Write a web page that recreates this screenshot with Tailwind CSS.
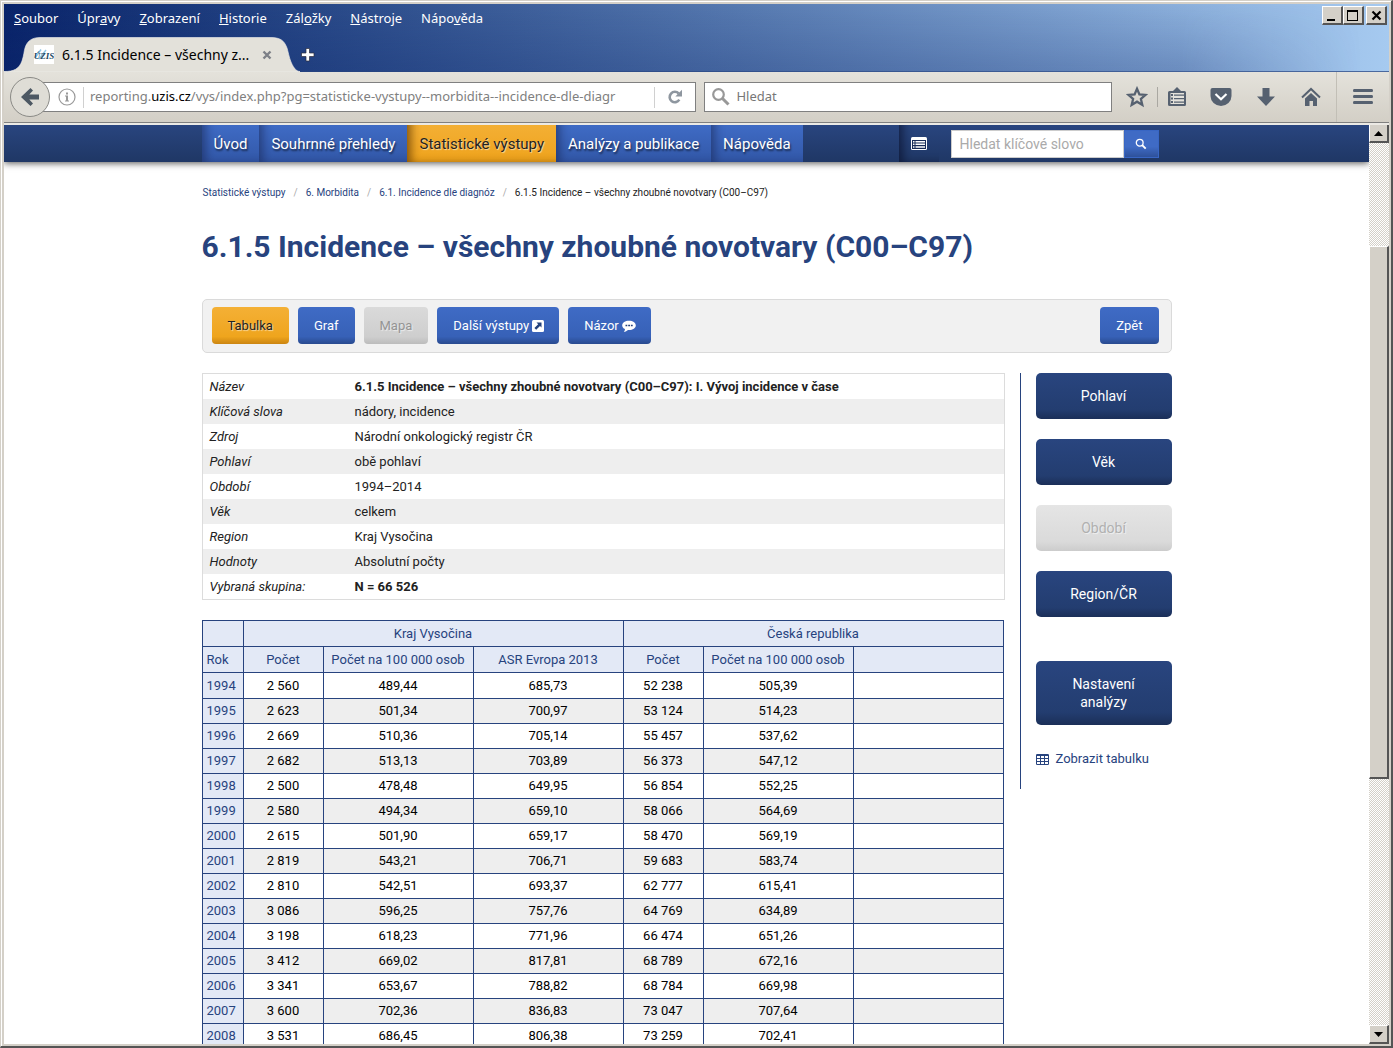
<!DOCTYPE html>
<html lang="cs">
<head>
<meta charset="utf-8">
<title>6.1.5 Incidence – všechny zhoubné novotvary (C00–C97)</title>
<script src="https://cdn.jsdelivr.net/npm/@tailwindcss/browser@4"></script>
</head>
<body class="bg-[#d4d0c8] font-['Roboto',sans-serif] text-[13px]">
<div class="flex h-screen flex-col overflow-hidden border-t border-l border-r-2 border-b-2 border-t-[#d4d0c8] border-l-[#d4d0c8] border-r-[#555] border-b-[#555]">
<div class="flex min-h-0 flex-1 flex-col border-t border-l border-white pt-[2px] pl-[2px] pr-[2px] pb-[2px]">

  <!-- Title bar -->
  <header class="relative h-[68px] shrink-0 border-b border-[#24407c]/70 bg-linear-to-r from-[#0a246a] to-[#a6caf0] font-['Noto_Sans',sans-serif]">
    <div class="absolute inset-0 bg-linear-to-b from-transparent to-[#0a246a]/25 mask-r-from-85% mask-r-to-98%"></div>
    <div class="relative flex h-[33px] items-start justify-between">
      <nav class="flex gap-[19px] pt-1 pl-[10px] text-[13px] leading-5 text-white" aria-label="Hlavní nabídka">
        <a href="#"><u>S</u>oubor</a><a href="#">Úpr<u>a</u>vy</a><a href="#"><u>Z</u>obrazení</a><a href="#"><u>H</u>istorie</a><a href="#">Zál<u>o</u>žky</a><a href="#"><u>N</u>ástroje</a><a href="#">Nápo<u>v</u>ěda</a>
      </nav>
      <div class="flex pt-[2px] pr-[2px]">
        <button aria-label="Minimalizovat" class="h-[19px] w-[21px] border-t border-l border-r-2 border-b-2 border-t-white border-l-white border-r-[#555] border-b-[#555] bg-[#d4d0c8]"><svg viewBox="0 0 18 16" class="h-4 w-[18px]"><path d="M4 12h8v2H4z"/></svg></button>
        <button aria-label="Maximalizovat" class="h-[19px] w-[21px] border-t border-l border-r-2 border-b-2 border-t-white border-l-white border-r-[#555] border-b-[#555] bg-[#d4d0c8]"><svg viewBox="0 0 18 16" class="h-4 w-[18px]"><path d="M3 3h11v11H3zM4 5v8h9V5z" fill-rule="evenodd"/></svg></button>
        <button aria-label="Zavřít" class="ml-[2px] h-[19px] w-[21px] border-t border-l border-r-2 border-b-2 border-t-white border-l-white border-r-[#555] border-b-[#555] bg-[#d4d0c8]"><svg viewBox="0 0 18 16" class="h-4 w-[18px]"><path d="M5.500 4.500l8 8m0-8l-8 8" stroke="#000" stroke-width="2.200" fill="none"/></svg></button>
      </div>
    </div>
    <div class="relative flex h-[35px] items-center">
      <div class="relative flex h-[35px] w-[296px] items-center pl-[30px] pr-7">
        <svg class="absolute inset-0 h-[35px] w-[296px]" viewBox="0 0 296 35"><path d="M0 35V34.500C10 34.500 15 32 18 24C20 18 20 14 21 11C23 4 28 .5 36 .5H266C276 .5 280 3 283 11C284 14 285 20 287 25C290 32 293 34.500 296 34.500V35z" fill="#e3e1da" stroke="#f3f2ee" stroke-width=".6"/></svg>
        <span class="relative flex h-[19px] w-5 items-center justify-center bg-white"><svg viewBox="0 0 20 19" class="h-[19px] w-5"><path d="M1 13L7 4.500M5 14l7-9" stroke="#8fc6e6" stroke-width="1.500"/><text x="10" y="14" font-family="Liberation Serif" font-size="9" font-style="italic" font-weight="bold" text-anchor="middle" fill="#234a66">ÚZIS</text></svg></span>
        <span class="relative flex-1 pl-2 text-[14px] whitespace-nowrap text-black">6.1.5 Incidence – všechny z...</span>
        <button aria-label="Zavřít panel" class="relative"><svg class="h-[10px] w-[10px]" viewBox="0 0 10 10"><path d="M1.500 1.500l7 7m0-7l-7 7" stroke="#7d8087" stroke-width="2.400"/></svg></button>
      </div>
      <button aria-label="Nový panel"><svg class="h-4 w-4" viewBox="0 0 16 16"><path d="M6 1.500h3.500V6H14v3.500H9.500V14H6V9.500H1.500V6H6z" fill="#fff" stroke="#2b2b3b" stroke-width=".7"/></svg></button>
    </div>
  </header>

  <!-- Navigation toolbar -->
  <div class="flex h-[51px] shrink-0 items-center border-b border-[#808080] bg-linear-to-b from-[#e4e2db] to-[#d3cfc6] pl-[6px] font-['Noto_Sans',sans-serif] text-[13px]">
    <button aria-label="Zpět" class="relative z-10 flex h-10 w-10 shrink-0 items-center justify-center rounded-full border border-[#8a8a86] bg-[#dfddd6]"><svg class="h-5 w-5" viewBox="0 0 20 20"><path d="M10.500 1L1 10l9.500 9 2.500-2.600L9.300 12.500H19v-5H9.300L13 3.600z" fill="#4d5863"/></svg></button>
    <div class="-ml-[10px] flex h-[30px] flex-[654] items-center border border-[#808080] bg-white pl-[17px]">
      <svg class="h-[18px] w-[18px] shrink-0" viewBox="0 0 18 18"><circle cx="9" cy="9" r="8" fill="none" stroke="#999" stroke-width="1.200"/><path d="M8 4.500h2v2H8zM7 7.500h3v5h1v1H7v-1h1v-4H7z" fill="#999"/></svg>
      <span class="ml-[7px] h-[21px] w-px bg-[#d0d0d0]"></span>
      <p aria-label="Adresa" class="ml-[6px] flex-1 truncate text-[#808080]">reporting.<span class="text-black">uzis.cz</span>/vys/index.php?pg=statisticke-vystupy--morbidita--incidence-dle-diagr</p>
      <span class="h-[21px] w-px bg-[#d0d0d0]"></span>
      <button aria-label="Obnovit" class="flex w-10 justify-center"><svg class="h-4 w-4" viewBox="0 0 16 16"><path d="M12.300 10.700a5.200 5.200 0 1 1-.6-6.200" fill="none" stroke="#8e969f" stroke-width="2.600"/><path d="M15 .8v6.700H8.300z" fill="#8e969f"/></svg></button>
    </div>
    <div class="ml-2 flex h-[30px] flex-[410] items-center border border-[#808080] bg-white pl-[6px]">
      <svg class="h-[20px] w-[20px]" viewBox="0 0 20 20"><circle cx="7.500" cy="7.500" r="5.300" fill="none" stroke="#989898" stroke-width="2.200"/><path d="M11.500 11.500l6 6" stroke="#989898" stroke-width="3"/></svg>
      <input aria-label="Hledat" placeholder="Hledat" class="min-w-0 flex-1 pl-[5px] outline-none placeholder:text-[#777]">
    </div>
    <div class="flex h-[50px] shrink-0 items-center pl-[5px] text-[#566170]">
      <button aria-label="Záložka" class="flex w-10 justify-center"><svg class="h-[22px] w-[22px]" viewBox="0 0 22 22"><path d="M11 2.800l2.400 5.600 6.100.5-4.600 4 1.400 6L11 15.700l-5.300 3.200 1.400-6-4.600-4 6.100-.5z" fill="none" stroke="currentColor" stroke-width="2.300"/></svg></button>
      <span class="h-5 w-px bg-[#aaa8a2]"></span>
      <button aria-label="Seznam záložek" class="flex w-[38px] justify-center"><svg class="h-5 w-5" viewBox="0 0 20 20"><path d="M1 5.500Q1 4 2.500 4H6l4-4 4 4h3.500Q19 4 19 5.500v12q0 1.500-1.500 1.500h-15Q1 19 1 17.500z" fill="currentColor"/><path d="M3.500 6h13.500v11h-13.500z" fill="#e4e2db"/><path d="M4 7h2v2H4zM4 10.500h2v2H4zM4 14h2v2H4zM7 7.500h10v1.300H7zM7 11h10v1.300H7zM7 14.500h10v1.300H7z" fill="currentColor"/></svg></button>
      <button aria-label="Pocket" class="flex w-[50px] justify-center"><svg class="h-5 w-[22px]" viewBox="0 0 22 20"><path d="M2.500 1h17Q21.500 1 21.500 3v6a10.500 10 0 0 1-21 0V3Q.5 1 2.500 1z" fill="currentColor"/><path d="M5.500 7l5.500 5.200L16.500 7" stroke="#fff" stroke-width="2.200" fill="none"/></svg></button>
      <button aria-label="Stahování" class="flex w-10 justify-center"><svg class="h-5 w-5" viewBox="0 0 20 20"><path d="M6.500 1h7v8.500H19L10 19 1 9.500h5.500z" fill="currentColor"/></svg></button>
      <button aria-label="Domů" class="flex w-[50px] justify-center"><svg class="h-5 w-5" viewBox="0 0 20 20"><path d="M1 10.500l9-8.500 9 8.500" stroke="currentColor" stroke-width="2" fill="none"/><path d="M4 11.500l6-5.600 6 5.600V19h-4v-5H8.500v5H4z" fill="currentColor"/></svg></button>
      <span class="h-[50px] w-px bg-[#c2bfb6]"></span>
      <button aria-label="Nabídka" class="flex w-[52px] justify-center"><svg class="h-5 w-5" viewBox="0 0 20 20"><path d="M1 2h18q1 0 1 1.500T19 5H1Q0 5 0 3.500T1 2zM1 8h18q1 0 1 1.500T19 11H1Q0 11 0 9.500T1 8zM1 14h18q1 0 1 1.500T19 17H1Q0 17 0 15.500T1 14z" fill="currentColor"/></svg></button>
    </div>
  </div>
  <div class="h-[2px] shrink-0 bg-[#eceae5]"></div>

  <!-- Viewport -->
  <div class="flex min-h-0 flex-1">
    <div class="min-w-0 flex-1 overflow-hidden bg-white">

      <div class="relative bg-linear-to-b from-[#29457f] to-[#1f3765] shadow-[0_1px_7px_rgba(0,0,0,0.7)]">
        <div class="mx-auto flex h-[37px] max-w-[970px] items-stretch text-[15px] leading-[38px]">
          <nav class="flex text-white [text-shadow:1px_2px_2px_rgba(0,0,0,0.6)]" aria-label="Web">
            <a href="#" class="bg-linear-to-b from-[#3f6bc5] to-[#3258a8] px-3 shadow-[inset_10px_-4px_10px_-6px_rgba(20,30,70,0.5)]">Úvod</a>
            <a href="#" class="bg-linear-to-b from-[#3f6bc5] to-[#3258a8] px-3 shadow-[inset_10px_-4px_10px_-6px_rgba(20,30,70,0.5)]">Souhrnné přehledy</a>
            <a href="#" class="bg-linear-to-b from-[#f3af34] to-[#efa31a] px-3 text-[#222] shadow-[inset_10px_-4px_10px_-6px_rgba(90,50,0,0.7)] [text-shadow:1px_1px_1px_rgba(255,255,255,0.6)]">Statistické výstupy</a>
            <a href="#" class="bg-linear-to-b from-[#3f6bc5] to-[#3258a8] px-3 shadow-[inset_10px_-4px_10px_-6px_rgba(20,30,70,0.5)]">Analýzy a publikace</a>
            <a href="#" class="bg-linear-to-b from-[#3f6bc5] to-[#3258a8] px-3 shadow-[inset_10px_-4px_10px_-6px_rgba(20,30,70,0.5)]">Nápověda</a>
          </nav>
          <form class="mr-[13px] ml-auto flex items-center">
            <button type="button" aria-label="Seznam" class="mr-3 flex h-[37px] w-10 items-center justify-center shadow-[inset_10px_-4px_10px_-6px_rgba(0,0,20,0.5)]"><svg class="h-[13px] w-4" viewBox="0 0 16 13"><rect width="16" height="13" rx="1.500" fill="#fff"/><path d="M1 3h14v9H1z" fill="#182c57"/><path d="M2 4h1.500v1.500H2zM4.500 4H14v1.500H4.500zM2 6.600h1.500v1.500H2zM4.500 6.600H14v1.500H4.500zM2 9.300h1.500v1.500H2zM4.500 9.300H14v1.500H4.500z" fill="#fff"/></svg></button>
            <input aria-label="Hledat klíčové slovo" placeholder="Hledat klíčové slovo" class="h-7 w-[173px] border border-[#ccc] bg-white px-2 text-[14px] outline-none placeholder:text-[#aaa]">
            <button type="button" aria-label="Hledat" class="flex h-7 w-[35px] items-center justify-center border border-[#3866c4] bg-linear-to-b from-[#3f6bc5] from-60% to-[#2e519b]"><svg class="h-3 w-3" viewBox="0 0 12 12"><circle cx="4.700" cy="4.700" r="3.400" fill="none" stroke="#fff" stroke-width="1.300"/><path d="M7.200 7.200l3.500 3.500" stroke="#fff" stroke-width="1.900"/></svg></button>
          </form>
        </div>
      </div>

      <main class="mx-auto max-w-[970px]">
        <nav class="flex pt-[23px] pl-px text-[10px] leading-[16px] text-[#27437e]" aria-label="Drobečková navigace">
          <a href="#">Statistické výstupy</a><span class="px-2 text-[#aaa]">/</span>
          <a href="#">6. Morbidita</a><span class="px-2 text-[#aaa]">/</span>
          <a href="#">6.1. Incidence dle diagnóz</a><span class="px-2 text-[#aaa]">/</span>
          <span class="text-[#222]">6.1.5 Incidence – všechny zhoubné novotvary (C00–C97)</span>
        </nav>
        <h1 class="pt-[26px] text-[30px] leading-10 font-bold text-[#27437e]">6.1.5 Incidence – všechny zhoubné novotvary (C00–C97)</h1>

        <div class="mt-8 flex h-[54px] gap-[9px] rounded-[5px] border border-[#dadada] bg-[#f1f1f1] py-[7px] pr-3 pl-[9px] leading-[37px] text-white [text-shadow:1px_2px_2px_rgba(0,0,0,0.6)]">
          <button class="h-[37px] rounded-[4px] bg-linear-to-b from-[#f4b035] via-[#efa51d] via-80% to-[#cb8511] px-4 text-[#222] [text-shadow:1px_1px_1px_rgba(255,255,255,0.6)]">Tabulka</button>
          <button class="h-[37px] rounded-[4px] bg-linear-to-b from-[#3f6bc5] via-[#3761b7] via-80% to-[#294a8f] px-4">Graf</button>
          <button disabled class="h-[37px] rounded-[4px] bg-linear-to-b from-[#dadada] via-[#cecece] via-80% to-[#bcbcbc] px-4 text-[#949494] [text-shadow:1px_1px_1px_rgba(255,255,255,0.6)]">Mapa</button>
          <button class="flex h-[37px] items-center gap-[3px] rounded-[4px] bg-linear-to-b from-[#3f6bc5] via-[#3761b7] via-80% to-[#294a8f] pr-[15px] pl-4">Další výstupy <svg class="h-3 w-3" viewBox="0 0 12 12"><rect width="12" height="12" rx="1.500" fill="#fff"/><path d="M4.500 2.500h5v5L8 6 4.200 9.800 2.400 8 6.200 4.200z" fill="#24427c"/></svg></button>
          <button class="flex h-[37px] items-center gap-[3px] rounded-[4px] bg-linear-to-b from-[#3f6bc5] via-[#3761b7] via-80% to-[#294a8f] pr-[15px] pl-4">Názor <svg class="h-3 w-[14px]" viewBox="0 0 14 12"><path d="M7 .8c3.800 0 6.800 2 6.800 4.700S10.800 10 7 10l-1-.1C4.500 11.200 3 11.700 1.800 11.700c.8-.7 1.200-1.500 1.200-2.600C1.200 8.300.2 7 .2 5.500.2 2.800 3.200.8 7 .8z" fill="#fff"/><path d="M3.500 4.700h1.800v1.600H3.500zM6.200 4.700H8v1.600H6.200zM8.900 4.700h1.800v1.600H8.900z" fill="#24427c"/></svg></button>
          <button class="ml-auto h-[37px] rounded-[4px] bg-linear-to-b from-[#3f6bc5] via-[#3761b7] via-80% to-[#294a8f] px-4">Zpět</button>
        </div>

        <div class="mt-5 flex items-start gap-[15px]">
          <div class="min-w-0 flex-1">
            <table class="w-full border-separate border-spacing-0 border border-[#dcdcdc] text-left leading-[25px] text-[#222]">
              <tbody id="info"></tbody>
            </table>
            <table class="mt-5 mr-px table-fixed border-collapse text-center leading-[25px] text-black">
              <colgroup><col class="w-[41px]"><col class="w-[80px]"><col class="w-[150px]"><col class="w-[150px]"><col class="w-[80px]"><col class="w-[150px]"><col class="w-[150px]"></colgroup>
              <thead class="bg-[#e3e9f6] text-[#27437e] [&_th]:h-[26px] [&_th]:border [&_th]:border-[#27437e] [&_th]:p-0 [&_th]:font-normal">
                <tr><th></th><th colspan="3">Kraj Vysočina</th><th colspan="3">Česká republika</th></tr>
                <tr><th class="pl-1! text-left">Rok</th><th>Počet</th><th>Počet na 100 000 osob</th><th>ASR Evropa 2013</th><th>Počet</th><th>Počet na 100 000 osob</th><th></th></tr>
              </thead>
              <tbody id="data" class="[&_td]:h-[25px] [&_td]:border [&_td]:border-[#27437e] [&_td]:p-0 [&_th]:border [&_th]:border-[#27437e]"></tbody>
            </table>
          </div>
          <aside class="flex h-[416px] shrink-0 flex-col border-l border-[#27437e] pl-[15px] text-[14px] leading-[18px]">
            <div class="flex w-[136px] flex-col gap-5 text-white [text-shadow:1px_2px_2px_rgba(0,0,0,0.6)]">
              <button class="h-[46px] rounded-[5px] bg-linear-to-b from-[#29457f] via-[#233d70] via-80% to-[#1b2f58]">Pohlaví</button>
              <button class="h-[46px] rounded-[5px] bg-linear-to-b from-[#29457f] via-[#233d70] via-80% to-[#1b2f58]">Věk</button>
              <button disabled class="h-[46px] rounded-[5px] bg-linear-to-b from-[#e5e5e5] via-[#dadada] via-80% to-[#cccccc] text-[#b0b0b0] [text-shadow:1px_1px_1px_rgba(255,255,255,0.6)]">Období</button>
              <button class="h-[46px] rounded-[5px] bg-linear-to-b from-[#29457f] via-[#233d70] via-80% to-[#1b2f58]">Region/ČR</button>
              <button class="mt-6 h-[64px] rounded-[5px] bg-linear-to-b from-[#29457f] via-[#233d70] via-80% to-[#1b2f58] px-6">Nastavení analýzy</button>
            </div>
            <a href="#" class="mt-[25px] flex items-center gap-[7px] text-[13px] text-[#27437e]"><svg class="h-[11px] w-[13px]" viewBox="0 0 13 11"><path d="M1.200 0h10.600Q13 0 13 1.200v8.600Q13 11 11.800 11H1.200Q0 11 0 9.800V1.200Q0 0 1.200 0zM1 2v2h3V2zm4 0v2h3V2zm4 0v2h3V2zM1 5v2h3V5zm4 0v2h3V5zm4 0v2h3V5zM1 8v2h3V8zm4 0v2h3V8zm4 0v2h3V8z" fill="#27437e" fill-rule="evenodd"/></svg>Zobrazit tabulku</a>
          </aside>
        </div>
      </main>
    </div>

    <!-- Scrollbar -->
    <div class="flex w-[20px] shrink-0 flex-col bg-[#e9e7e3] bg-[repeating-conic-gradient(#d4d0c8_0_25%,#fff_0_50%)] bg-size-[2px_2px]">
      <button aria-label="Nahoru" class="flex h-[18px] w-full shrink-0 items-center justify-center border-l border-r-2 border-b-2 border-l-white border-r-[#555] border-b-[#555] bg-[#d4d0c8]"><svg class="h-[5px] w-[9px]" viewBox="0 0 9 5"><path d="M0 5l4.500-5L9 5z"/></svg></button>
      <div class="grow-[103]"></div>
      <div class="grow-[530] border-t border-l border-r-2 border-b-2 border-t-white border-l-white border-r-[#555] border-b-[#555] bg-[#d4d0c8]"></div>
      <div class="grow-[246]"></div>
      <button aria-label="Dolů" class="flex h-[19px] w-full shrink-0 items-center justify-center border-t border-l border-r-2 border-b-2 border-t-white border-l-white border-r-[#555] border-b-[#555] bg-[#d4d0c8]"><svg class="h-[5px] w-[9px]" viewBox="0 0 9 5"><path d="M0 0l4.500 5L9 0z"/></svg></button>
    </div>
  </div>
</div>
</div>
<script>
const info = [
  ['Název', '<b>6.1.5 Incidence – všechny zhoubné novotvary (C00–C97): I. Vývoj incidence v čase</b>'],
  ['Klíčová slova', 'nádory, incidence'],
  ['Zdroj', 'Národní onkologický registr ČR'],
  ['Pohlaví', 'obě pohlaví'],
  ['Období', '1994–2014'],
  ['Věk', 'celkem'],
  ['Region', 'Kraj Vysočina'],
  ['Hodnoty', 'Absolutní počty'],
  ['Vybraná skupina:', '<b>N = 66 526</b>']
];
document.getElementById('info').innerHTML = info.map(r =>
  `<tr class="even:bg-[#eee]"><th class="w-[145px] p-0 pl-[7px] font-normal italic">${r[0]}</th><td class="p-0 pl-[7px]">${r[1]}</td></tr>`).join('');

const rows = `1994|2 560|489,44|685,73|52 238|505,39
1995|2 623|501,34|700,97|53 124|514,23
1996|2 669|510,36|705,14|55 457|537,62
1997|2 682|513,13|703,89|56 373|547,12
1998|2 500|478,48|649,95|56 854|552,25
1999|2 580|494,34|659,10|58 066|564,69
2000|2 615|501,90|659,17|58 470|569,19
2001|2 819|543,21|706,71|59 683|583,74
2002|2 810|542,51|693,37|62 777|615,41
2003|3 086|596,25|757,76|64 769|634,89
2004|3 198|618,23|771,96|66 474|651,26
2005|3 412|669,02|817,81|68 789|672,16
2006|3 341|653,67|788,82|68 784|669,98
2007|3 600|702,36|836,83|73 047|707,64
2008|3 531|686,45|806,38|73 259|702,41`.split('\n').map(l => l.split('|'));
document.getElementById('data').innerHTML = rows.map(r =>
  `<tr class="leading-6 first:leading-[25px] even:bg-[#eee]"><th class="bg-[#e3e9f6] p-0 pl-1 text-left font-normal text-[#27437e]">${r[0]}</th>${r.slice(1).map(c => `<td>${c}</td>`).join('')}<td></td></tr>`).join('');
</script>
</body>
</html>
